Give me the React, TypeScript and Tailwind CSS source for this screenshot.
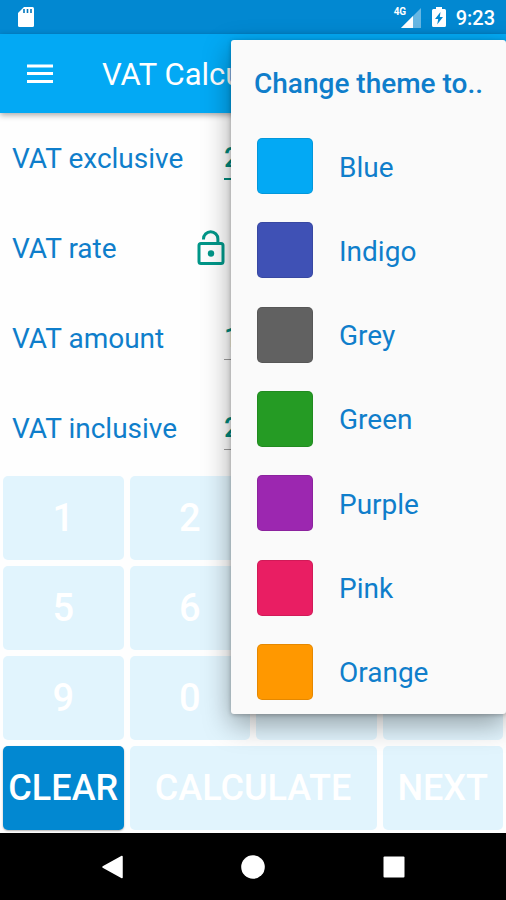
import { useState } from 'react'
import clsx from 'clsx'

const themes = [
  { name: 'Blue', swatch: 'bg-[#03a9f4]' },
  { name: 'Indigo', swatch: 'bg-[#3f51b5]' },
  { name: 'Grey', swatch: 'bg-[#616161]' },
  { name: 'Green', swatch: 'bg-[#259b24]' },
  { name: 'Purple', swatch: 'bg-[#9c27b0]' },
  { name: 'Pink', swatch: 'bg-[#e91e63]' },
  { name: 'Orange', swatch: 'bg-[#ff9800]' },
]

const keys = [
  { label: '1' },
  { label: '2' },
  { label: '3' },
  { label: '4' },
  { label: '5' },
  { label: '6' },
  { label: '7' },
  { label: '8' },
  { label: '9' },
  { label: '0' },
  { label: '.' },
  { label: 'DEL' },
  { label: 'CLEAR', enabled: true },
  { label: 'CALCULATE', wide: true },
  { label: 'NEXT' },
]

const initialFields = [
  { id: 'exclusive', label: 'VAT exclusive', value: '2', active: true },
  { id: 'rate', label: 'VAT rate', value: '', lock: true },
  { id: 'amount', label: 'VAT amount', value: '1' },
  { id: 'inclusive', label: 'VAT inclusive', value: '2' },
]

function StatusBar() {
  return (
    <div className="flex h-[34px] items-center bg-[#0288d1] pr-[11px] pl-[17px] text-white">
      <svg width="18" height="22" viewBox="0 0 18 22" aria-hidden="true">
        <path d="M7 1h8.500a1.500 1.500 0 0 1 1.500 1.500v17a1.500 1.500 0 0 1-1.500 1.500h-13a1.500 1.500 0 0 1-1.500-1.500V7z" fill="#fff" />
        <path d="M7 3v4M10.500 3v4M14 3v4" stroke="#0277bd" strokeWidth="1.600" />
      </svg>
      <div className="ml-auto flex items-center">
        <div className="relative h-[22px] w-[27px]">
          <span className="absolute top-0 left-0 text-[10px] leading-[12px] font-bold">4G</span>
          <svg className="absolute right-0 bottom-0" width="21" height="21" viewBox="0 0 21 21" aria-hidden="true">
            <path d="M21 1v20H1z" fill="#fff" opacity="0.4" />
            <path d="M13 9v12H1z" fill="#fff" />
          </svg>
        </div>
        <svg className="ml-[10px]" width="16" height="22" viewBox="0 0 16 22" aria-hidden="true">
          <path d="M5 1h6v2h2.500A1.500 1.500 0 0 1 15 4.500v15a1.500 1.500 0 0 1-1.500 1.500h-11A1.500 1.500 0 0 1 1 19.500v-15A1.500 1.500 0 0 1 2.500 3H5z" fill="#fff" />
          <path d="M9.500 6L4 13h3.200L6.200 18.500 12 11H8.800z" fill="#0288d1" />
        </svg>
        <span className="ml-[9px] pt-[2px] text-[20px] leading-[22px] font-medium">9:23</span>
      </div>
    </div>
  )
}

function AppBar() {
  return (
    <header className="relative z-10 flex h-[79px] items-center bg-[#03a9f4] pl-[26px] text-white shadow-[0_2px_6px_rgba(0,0,0,0.35)]">
      <button type="button" aria-label="Open navigation">
        <svg width="28" height="20" viewBox="0 0 28 20" aria-hidden="true">
          <path d="M1 2h26M1 9.500h26M1 17.500h26" stroke="#fff" strokeWidth="3" />
        </svg>
      </button>
      <h1 className="ml-12 pt-[2px] text-[31px] leading-[40px] whitespace-nowrap">VAT Calculator</h1>
    </header>
  )
}

function UnlockIcon() {
  return (
    <svg width="28" height="36" viewBox="0 0 28 36" fill="none" stroke="#009688" strokeWidth="3" aria-hidden="true">
      <rect x="2" y="13.500" width="24" height="20" rx="2" />
      <path d="M6.500 9.500V9a7.200 7.200 0 0 1 14.400 0v5" />
      <circle cx="14" cy="23.500" r="3.200" fill="#009688" stroke="none" />
    </svg>
  )
}

function ThemeMenu({ selected, onSelect }: { selected: string; onSelect: (name: string) => void }) {
  return (
    <div
      role="menu"
      aria-labelledby="theme-title"
      className="absolute top-10 right-0 bottom-[186px] left-[231px] z-20 flex flex-col rounded-[3px] bg-[#fafafa] shadow-[0_10px_28px_rgba(0,0,0,0.36),0_1px_4px_rgba(0,0,0,0.25)]"
    >
      <h2 id="theme-title" className="flex h-[84px] items-center pt-[3px] pl-[23px] text-[28px] font-medium whitespace-nowrap text-[#0f7ecb]">
        Change theme to..
      </h2>
      {themes.map((theme) => (
        <button
          key={theme.name}
          type="button"
          role="menuitemradio"
          aria-checked={selected === theme.name}
          onClick={() => onSelect(theme.name)}
          className="flex flex-1 items-center gap-[26px] pl-[26px] text-left text-[28px] text-[#0f7ecb]"
        >
          <span className={clsx('h-14 w-14 rounded-[5px] border border-black/10', theme.swatch)} />
          <span className="pt-[3px]">{theme.name}</span>
        </button>
      ))}
    </div>
  )
}

export default function App() {
  const [fields, setFields] = useState(initialFields)
  const [theme, setTheme] = useState('Blue')

  const updateField = (id: string, value: string) => {
    setFields(fields.map((f) => (f.id === id ? { ...f, value } : f)))
  }

  return (
    <div className="relative flex min-h-screen flex-col overflow-hidden bg-[#fefefe] font-[Roboto,sans-serif]">
      <StatusBar />
      <AppBar />

      <main className="flex flex-1 flex-col">
        {fields.map((field) => (
          <div key={field.id} className="flex h-[90px] items-center pr-3 pl-3 text-[28px]">
            <label htmlFor={field.id} className="w-[185px] pt-[2px] text-[#0f7ecb]">
              {field.label}
            </label>
            {field.lock ? (
              <button type="button" aria-label="Lock rate" className="mr-3">
                <UnlockIcon />
              </button>
            ) : (
              <span className="w-[27px]" />
            )}
            <input
              id={field.id}
              inputMode="decimal"
              value={field.value}
              onChange={(e) => updateField(field.id, e.target.value)}
              className={clsx(
                'h-[44px] min-w-0 flex-1 bg-transparent font-medium text-[#00897b] outline-none',
                field.active ? 'border-b-2 border-[#00897b]' : 'border-b border-[#9e9e9e]'
              )}
            />
          </div>
        ))}

        <div className="grid flex-1 grid-cols-4 gap-[6px] p-[3px]">
          {keys.map((key) => (
            <button
              key={key.label}
              type="button"
              disabled={!key.enabled}
              className={clsx(
                'min-h-[84px] rounded-[5px] font-medium text-white',
                key.label.length > 1 ? 'text-[36px]' : 'text-[38px]',
                key.wide && 'col-span-2',
                key.enabled ? 'bg-[#0288d1] shadow-[0_1px_2px_rgba(0,0,0,0.3)]' : 'bg-[#e1f4fd]'
              )}
            >
              {key.label}
            </button>
          ))}
        </div>
      </main>

      <nav className="flex h-[67px] items-center justify-center gap-[117px] bg-black">
        <button type="button" aria-label="Back">
          <svg width="24" height="24" viewBox="0 0 24 24" aria-hidden="true">
            <path d="M22 1.500v21L3 12z" fill="#fff" stroke="#fff" strokeWidth="1.500" strokeLinejoin="round" />
          </svg>
        </button>
        <button type="button" aria-label="Home">
          <svg width="24" height="24" viewBox="0 0 24 24" aria-hidden="true">
            <circle cx="12" cy="12" r="11.800" fill="#fff" />
          </svg>
        </button>
        <button type="button" aria-label="Recent apps">
          <svg width="24" height="24" viewBox="0 0 24 24" aria-hidden="true">
            <rect x="1.500" y="1.500" width="21" height="21" rx="1" fill="#fff" />
          </svg>
        </button>
      </nav>

      <ThemeMenu selected={theme} onSelect={setTheme} />
    </div>
  )
}
